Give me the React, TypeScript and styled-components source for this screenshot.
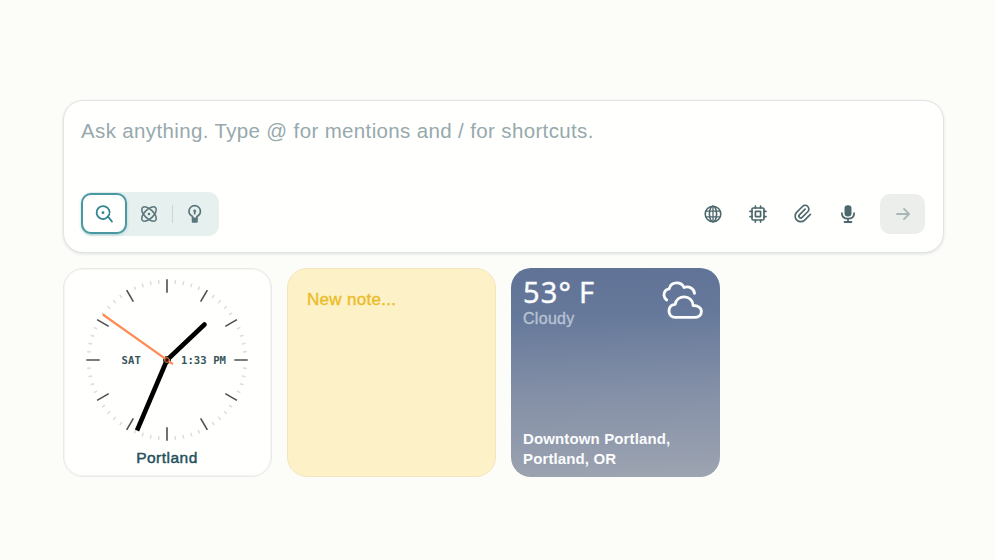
import React from "react";
import styled, { createGlobalStyle, css } from "styled-components";
import { TbPaperclip } from "react-icons/tb";

const Global = createGlobalStyle`
  * { box-sizing: border-box; }
  body { margin: 0; background: #fcfcf9; font-family: "Liberation Sans", Arial, sans-serif; }
`;

const Page = styled.main`
  width: 995px;
  height: 560px;
  padding: 99.5px 51px 0 62.5px;
  display: flex;
  flex-direction: column;
  gap: 15px;
  background: #fcfcf9;
  overflow: hidden;
`;

const Composer = styled.section`
  height: 153px;
  padding: 18px 18px 16px 17px;
  display: flex;
  flex-direction: column;
  justify-content: space-between;
  background: #fffffd;
  border: 1.5px solid #dfe4e4;
  border-radius: 20px;
  box-shadow: 0 1px 3px rgba(20, 60, 70, 0.12);
`;

const Placeholder = styled.div`
  margin-left: 0.5px;
  font-size: 20.5px;
  line-height: 24px;
  letter-spacing: 0.36px;
  color: #96a9ad;
  white-space: nowrap;
`;

const Toolbar = styled.div`
  display: flex;
  align-items: center;
  justify-content: space-between;
`;

const Modes = styled.div`
  display: flex;
  align-items: center;
  width: 138px;
  height: 44px;
  background: #e6f0ef;
  border-radius: 11px;
`;

const Mode = styled.button<{ $active?: boolean }>`
  width: 45px;
  height: 41px;
  padding: 0;
  display: grid;
  place-items: center;
  border: 0;
  border-radius: 10px;
  background: transparent;
  color: #5b777b;
  ${(p) =>
    p.$active &&
    css`
      width: 46px;
      border: 2px solid #4a98a2;
      background: #fffffd;
      color: #328592;
      box-shadow: 0 1px 3px rgba(33, 128, 141, 0.3);
    `}
`;

const Divider = styled.span`
  width: 1px;
  height: 18px;
  background: #c9d7d8;
`;

const Actions = styled.div`
  display: flex;
  align-items: center;
`;

const Action = styled.button`
  width: 45px;
  height: 40px;
  padding: 0;
  display: grid;
  place-items: center;
  border: 0;
  background: transparent;
  color: #4c686d;
`;

const Submit = styled(Action)`
  margin-left: 10px;
  background: #eceeec;
  color: #a8b6b8;
  border-radius: 10px;
`;

const Widgets = styled.section`
  display: flex;
  gap: 15px;
`;

const Card = styled.article`
  width: 209px;
  height: 209px;
  border-radius: 20px;
  overflow: hidden;
`;

const ClockCard = styled(Card)`
  background: #fffffd;
  border: 1px solid #e9e9e7;
  box-shadow: inset 0 0 0 1px #f5f5f3;
  display: flex;
  flex-direction: column;
  align-items: center;
  padding-top: 7px;
`;

const City = styled.div`
  margin-top: 4px;
  font-size: 15.5px;
  line-height: 20px;
  letter-spacing: 0.5px;
  color: #244f5b;
  -webkit-text-stroke: 0.45px #244f5b;
`;

const DialText = styled.text`
  font-family: "DejaVu Sans Mono", monospace;
  font-size: 10.6px;
  font-weight: 700;
  fill: #36545a;
`;

const NoteCard = styled(Card)`
  padding: 20px 19.5px;
  background: #fdf1c8;
  border: 1px solid #f3e6bd;
  color: #ebbd28;
  font-size: 17px;
  line-height: 22px;
  letter-spacing: 0.3px;
  -webkit-text-stroke: 0.4px #ebbd28;
`;

const WeatherCard = styled(Card)`
  padding: 10px 14px 8px 12.5px;
  display: flex;
  flex-direction: column;
  justify-content: space-between;
  background: linear-gradient(178deg, #607396 0%, #65789a 22%, #8490a7 60%, #9da4b1 100%);
  color: #fbfcfd;
`;

const WeatherTop = styled.div`
  display: flex;
  justify-content: space-between;
`;

const Temperature = styled.div`
  font-family: "Noto Sans", sans-serif;
  font-size: 29px;
  line-height: 28px;
  letter-spacing: 1.2px;
  word-spacing: -2px;
  white-space: nowrap;
  -webkit-text-stroke: 0.4px #fbfcfd;
`;

const Condition = styled.div`
  margin-top: 3px;
  font-size: 16px;
  line-height: 20px;
  letter-spacing: 0.3px;
  color: #b9c3d3;
  -webkit-text-stroke: 0.35px #b9c3d3;
`;

const Place = styled.div`
  font-size: 15px;
  line-height: 20px;
  font-weight: 700;
  letter-spacing: 0.13px;
  white-space: nowrap;
`;

const stroke = {
  fill: "none",
  stroke: "currentColor",
  strokeLinecap: "round" as const,
  strokeLinejoin: "round" as const,
};

const SearchIcon = () => (
  <svg width="20" height="20" viewBox="0 0 20 20" {...stroke} strokeWidth="1.8">
    <path d="M10.2 15A6.5 6.5 0 1 1 15.6 8.6M13.2 13.2h1.3l3.5 4.4M10.2 15c1.2-.3 2.2-.9 3-1.8 1-.9 1.7-1.9 2.1-3.1" />
    <circle cx="9" cy="8.7" r="1.4" fill="currentColor" stroke="none" />
  </svg>
);

const ResearchIcon = () => (
  <svg width="20" height="20" viewBox="0 0 20 20" {...stroke} strokeWidth="1.6">
    <ellipse cx="10" cy="10" rx="9.2" ry="4.5" transform="rotate(45 10 10)" />
    <ellipse cx="10" cy="10" rx="9.2" ry="4.5" transform="rotate(-45 10 10)" />
    <circle cx="10" cy="10" r="1.3" fill="currentColor" stroke="none" />
  </svg>
);

const LabsIcon = () => (
  <svg width="20" height="20" viewBox="0 0 20 20" {...stroke} strokeWidth="1.7">
    <path d="M7.6 14.2v-1.7C5.3 11.4 4 9.6 4 7.3a5.7 5.7 0 0 1 11.4 0c0 2.3-1.2 4.1-3.5 5.2v1.7M9.7 8.2v1.5" />
    <circle cx="9.7" cy="7" r="1.4" fill="currentColor" stroke="none" />
    <path d="M7.6 14.4h4.3v3.4H7.6Z" fill="currentColor" />
  </svg>
);

const GlobeIcon = () => (
  <svg width="20" height="20" viewBox="0 0 20 20" {...stroke} strokeWidth="1.6">
    <circle cx="10" cy="10" r="7.8" />
    <ellipse cx="10" cy="10" rx="3.6" ry="7.8" />
    <path d="M2.9 7.2h14.2M2.9 12.8h14.2M10 2.2v15.6" strokeWidth="1.3" />
  </svg>
);

const ChipIcon = () => (
  <svg width="20" height="20" viewBox="0 0 20 20" {...stroke} strokeWidth="1.7">
    <rect x="4" y="4" width="12" height="12" rx="1.2" />
    <rect x="7.4" y="7.4" width="5.2" height="5.2" rx=".3" />
    <path d="M7.4 4V2M12.6 4V2M7.4 18v-2M12.6 18v-2M4 7.4H2M4 12.6H2M18 7.4h-2M18 12.6h-2" />
  </svg>
);

const MicIcon = () => (
  <svg width="20" height="20" viewBox="0 0 20 20" {...stroke} strokeWidth="1.8">
    <rect x="6.5" y="1.2" width="7" height="11.4" rx="3.3" fill="currentColor" stroke="none" />
    <path d="M3.9 9.2c0 3.5 2.3 5.5 6.1 5.5s6.1-2 6.1-5.5M10 14.7v3M6.6 18h6.8" />
  </svg>
);

const ArrowIcon = () => (
  <svg width="20" height="20" viewBox="0 0 20 20" {...stroke} strokeWidth="1.8">
    <path d="M4 10h12M11 4.9l5.1 5.1-5.1 5.1" />
  </svg>
);

const CloudIcon = () => (
  <svg width="44" height="42" viewBox="0 0 44 42" {...stroke} strokeWidth="2.9">
    <path d="M13.3 39.4c-3.9 0-6.3-2.8-6.3-6.4 0-3.7 2.5-6.5 6.2-6.7.8-4.4 4.5-7.4 9-7.4 4.9 0 8.8 3.5 8.9 8.6 4-.2 8.3 1.9 8.3 6 0 3.6-3 5.9-6.9 5.9Z" />
    <path d="M4.7 22C1.4 19.7 1.2 15.3 3.4 12.7c1-1.1 2.2-1.7 3.7-1.8.9-3.7 4-6 7.7-6 3.3 0 5.9 1.8 7.2 4.6 2.1-.8 5-.7 7.1.6 2.1 1.2 3.1 2.9 3.4 5.2" />
  </svg>
);

const ticks = Array.from({ length: 60 }, (_, i) => i);

const ClockFace = () => (
  <svg width="168" height="168" viewBox="-84 -84 168 168">
    {ticks.map((i) => {
      const major = i % 5 === 0;
      return (
        <line
          key={i}
          y1={major ? -80.7 : -80.3}
          y2={major ? -67.3 : -76.6}
          stroke={major ? "#4d5050" : "#dcdcda"}
          strokeWidth={major ? 1.6 : 1.5}
          transform={`rotate(${i * 6})`}
        />
      );
    })}
    <DialText x="-45.5" y="4.3" textLength="19.5">SAT</DialText>
    <DialText x="14" y="4.3" textLength="45">1:33 PM</DialText>
    <g strokeLinecap="round">
      <path d="M0 0-30 70.5" stroke="#000" strokeWidth="4.6" strokeLinecap="butt" />
      <path d="M0 0 37.5-35.5" stroke="#000" strokeWidth="4.6" />
      <circle r="3.8" fill="#000" />
      <path d="M-63.5-45 5.2 3.7" stroke="#ff8c55" strokeWidth="2.2" />
      <circle r="2.4" fill="#321b12" stroke="#f08048" strokeWidth="1" />
    </g>
  </svg>
);

export default function App() {
  return (
    <>
      <Global />
      <Page>
        <Composer>
          <Placeholder>Ask anything. Type @ for mentions and / for shortcuts.</Placeholder>
          <Toolbar>
            <Modes>
              <Mode $active aria-label="Search"><SearchIcon /></Mode>
              <Mode aria-label="Research"><ResearchIcon /></Mode>
              <Divider />
              <Mode aria-label="Labs"><LabsIcon /></Mode>
            </Modes>
            <Actions>
              <Action aria-label="Sources"><GlobeIcon /></Action>
              <Action aria-label="Model"><ChipIcon /></Action>
              <Action aria-label="Attach"><TbPaperclip size={21} strokeWidth={1.9} /></Action>
              <Action aria-label="Dictate"><MicIcon /></Action>
              <Submit aria-label="Submit"><ArrowIcon /></Submit>
            </Actions>
          </Toolbar>
        </Composer>
        <Widgets>
          <ClockCard>
            <ClockFace />
            <City>Portland</City>
          </ClockCard>
          <NoteCard>New note...</NoteCard>
          <WeatherCard>
            <WeatherTop>
              <div>
                <Temperature>53° F</Temperature>
                <Condition>Cloudy</Condition>
              </div>
              <CloudIcon />
            </WeatherTop>
            <Place>
              Downtown Portland,
              <br />
              Portland, OR
            </Place>
          </WeatherCard>
        </Widgets>
      </Page>
    </>
  );
}
